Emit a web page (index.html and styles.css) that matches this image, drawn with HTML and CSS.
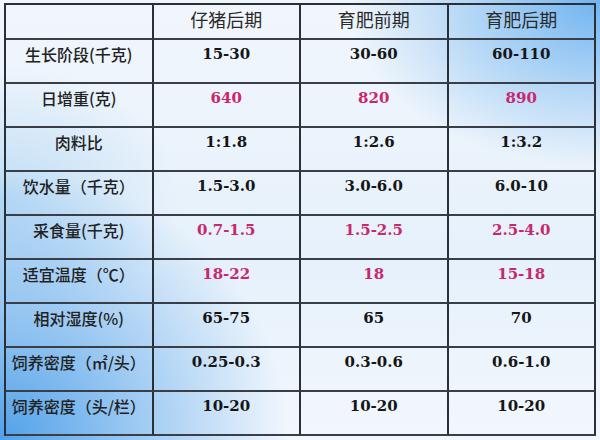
FILE: index.html
```html
<!DOCTYPE html>
<html lang="zh">
<head>
<meta charset="utf-8">
<title>猪生长阶段参数表</title>
<link rel="stylesheet" href="styles.css">
</head>
<body>
<div class="sheet">
  <div class="cell head"></div>
  <div class="cell head">仔猪后期</div>
  <div class="cell head">育肥前期</div>
  <div class="cell head">育肥后期</div>

  <div class="cell label">生长阶段(千克)</div>
  <div class="cell num">15-30</div>
  <div class="cell num">30-60</div>
  <div class="cell num">60-110</div>

  <div class="cell label">日增重(克)</div>
  <div class="cell num pink">640</div>
  <div class="cell num pink">820</div>
  <div class="cell num pink">890</div>

  <div class="cell label">肉料比</div>
  <div class="cell num">1:1.8</div>
  <div class="cell num">1:2.6</div>
  <div class="cell num">1:3.2</div>

  <div class="cell label">饮水量（千克）</div>
  <div class="cell num">1.5-3.0</div>
  <div class="cell num">3.0-6.0</div>
  <div class="cell num">6.0-10</div>

  <div class="cell label">采食量(千克)</div>
  <div class="cell num pink">0.7-1.5</div>
  <div class="cell num pink">1.5-2.5</div>
  <div class="cell num pink">2.5-4.0</div>

  <div class="cell label">适宜温度（℃）</div>
  <div class="cell num pink">18-22</div>
  <div class="cell num pink">18</div>
  <div class="cell num pink">15-18</div>

  <div class="cell label">相对湿度(%)</div>
  <div class="cell num">65-75</div>
  <div class="cell num">65</div>
  <div class="cell num">70</div>

  <div class="cell label">饲养密度（㎡/头）</div>
  <div class="cell num">0.25-0.3</div>
  <div class="cell num">0.3-0.6</div>
  <div class="cell num">0.6-1.0</div>

  <div class="cell label">饲养密度（头/栏）</div>
  <div class="cell num">10-20</div>
  <div class="cell num">10-20</div>
  <div class="cell num">10-20</div>
</div>
</body>
</html>
```

FILE: styles.css
```css
html, body {
  margin: 0;
  padding: 0;
  width: 600px;
  height: 440px;
  overflow: hidden;
}

body {
  background:
    radial-gradient(ellipse 48% 62% at 0% 100%, rgba(72, 156, 232, 0.95), rgba(72, 156, 232, 0) 100%),
    radial-gradient(ellipse 42% 38% at 100% 0%, rgba(112, 180, 240, 1), rgba(112, 180, 240, 0) 100%),
    radial-gradient(ellipse 30% 30% at 0% 45%, rgba(150, 200, 240, 0.5), rgba(150, 200, 240, 0) 100%),
    linear-gradient(to bottom, #f1f6fc, #e6f1fb 60%, #f2f7fd);
  font-family: "Noto Sans CJK SC", "Noto Sans", sans-serif;
}

.sheet {
  box-sizing: border-box;
  margin: 3px 0 0 4px;
  width: 592px;
  height: 433px;
  border-left: 2px solid #2b2f36;
  border-top: 2px solid #2b2f36;
  display: grid;
  grid-template-columns: repeat(4, 1fr);
  grid-template-rows: 35px repeat(9, 44px);
}

.cell {
  box-sizing: border-box;
  border-right: 2px solid #2b2f36;
  border-bottom: 2px solid #3a3f47;
  display: flex;
  justify-content: center;
  align-items: flex-start;
  padding-top: 4px;
  line-height: 20px;
  white-space: nowrap;
}

.head {
  padding-top: 2px;
  line-height: 24px;
  font-size: 18px;
  font-weight: 400;
  color: #2a2a2a;
}

.label {
  font-size: 16px;
  font-weight: 500;
  color: #222222;
}

.num {
  font-family: "DejaVu Serif", "Liberation Serif", serif;
  font-weight: 700;
  font-size: 15px;
  color: #161616;
}

.pink {
  color: #c8286e;
}
```
